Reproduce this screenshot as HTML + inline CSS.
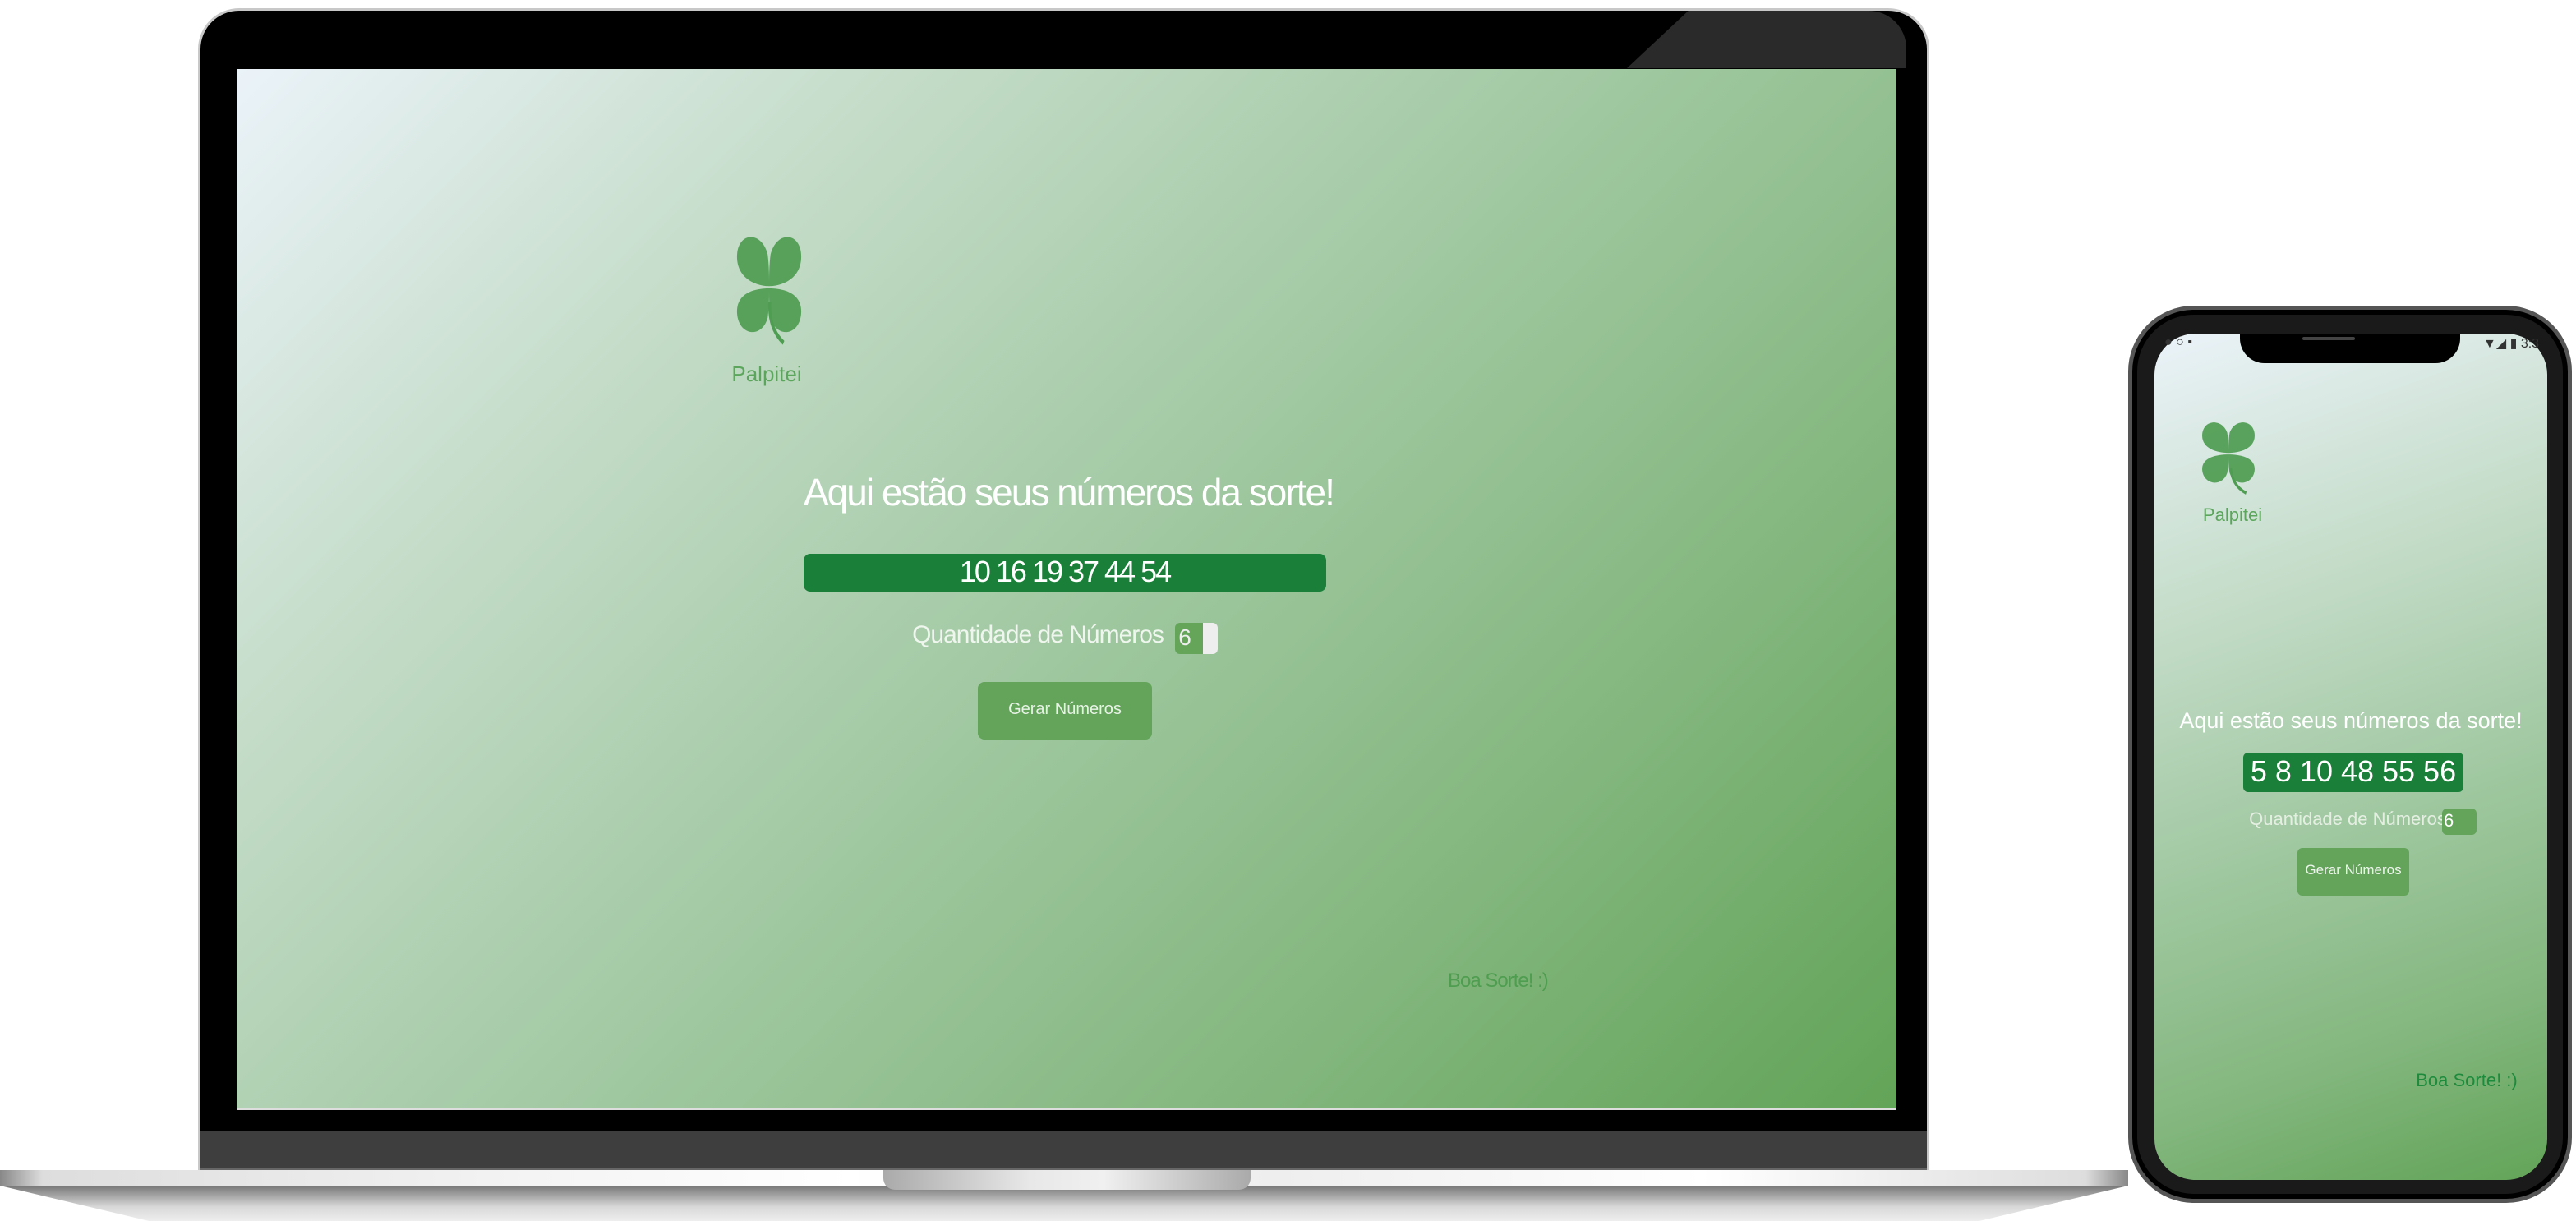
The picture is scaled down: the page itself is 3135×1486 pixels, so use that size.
<!DOCTYPE html>
<html><head><meta charset="utf-8"><style>
*{margin:0;padding:0;box-sizing:border-box}
body{width:3135px;height:1486px;background:#fff;position:relative;overflow:hidden;font-family:"Liberation Sans",sans-serif}
.a{position:absolute}
.grad{background:linear-gradient(135deg,#ebf3f9 0%,#c4dcc8 25%,#a2c9a3 50%,#84b77f 75%,#62a458 100%)}
.t{position:absolute;white-space:nowrap;text-align:center}
</style></head><body>
<div class="a" style="left:0;top:1424px;width:2590px;height:20px;background:linear-gradient(90deg,#888 0%,#ddd 2%,#f4f4f4 25%,#fff 40%,#eee 60%,#fff 80%,#ddd 98%,#888 100%)"></div>
<div class="a" style="left:0;top:1443px;width:2590px;height:43px;background:linear-gradient(180deg,#777,#d8d8d8 60%,#eee);clip-path:polygon(0 0,100% 0,93% 100%,7% 100%);border-radius:0 0 60px 60px"></div>
<div class="a" style="left:1075px;top:1424px;width:447px;height:24px;background:linear-gradient(90deg,#aaa,#e8e8e8 40%,#f0f0f0 60%,#aaa);border-radius:0 0 14px 14px"></div>
<div class="a" style="left:241px;top:10px;width:2107px;height:1414px;background:#000;border-radius:50px 50px 0 0;border:3px solid #c8c8c8;border-bottom:none"></div>
<div class="a" style="left:244px;top:1376px;width:2101px;height:48px;background:#3e3e3e;border-bottom:3px solid #666"></div>
<div class="a" style="left:1980px;top:13px;width:340px;height:70px;background:#2a2a2a;clip-path:polygon(22% 0,100% 0,100% 100%,0 100%);border-radius:0 46px 0 0"></div>
<div class="a grad" style="left:288px;top:84px;width:2020px;height:1267px;border-bottom:3px solid #ddd">
<svg class="a" style="left:604px;top:198px" width="88" height="138" viewBox="0 0 100 100" preserveAspectRatio="none">
<g fill="#4f9d52" opacity=".92">
<path d="M50 48 C30 48 2 40 6 18 C10 0 40 0 48 20 C50 30 50 40 50 48Z"/>
<path d="M50 48 C70 48 98 40 94 18 C90 0 60 0 52 20 C50 30 50 40 50 48Z"/>
<path d="M50 50 C30 50 2 54 6 74 C10 92 40 94 48 76 C50 66 50 58 50 50Z"/>
<path d="M50 50 C70 50 98 54 94 74 C90 92 60 94 52 76 C50 66 50 58 50 50Z"/></g>
<path d="M51 62 Q49 85 70 98" stroke="#4f9d52" stroke-width="4" fill="none"/>
</svg>
<div class="t" style="left:540px;top:356px;width:210px;font-size:26px;color:#5ca55c">Palpitei</div>
<div class="t" style="left:690px;top:488px;width:636px;font-size:46px;color:#fff;letter-spacing:-2px">Aqui estão seus números da sorte!</div>
<div class="a" style="left:690px;top:590px;width:636px;height:46px;background:#1a8039;border-radius:8px"></div>
<div class="t" style="left:690px;top:591px;width:636px;font-size:36px;color:#fff;letter-spacing:-2px">10 16 19 37 44 54</div>
<div class="t" style="left:820px;top:672px;width:310px;font-size:30px;color:#eef6ee;letter-spacing:-1px">Quantidade de Números</div>
<div class="a" style="left:1142px;top:674px;width:52px;height:38px;background:#64a55a;border-radius:6px"></div>
<div class="a" style="left:1176px;top:674px;width:18px;height:38px;background:#eee;border-radius:0 6px 6px 0"></div>
<div class="t" style="left:1142px;top:676px;width:24px;font-size:28px;color:#eee">6</div>
<div class="a" style="left:902px;top:746px;width:212px;height:70px;background:#63a35a;border-radius:8px"></div>
<div class="t" style="left:902px;top:768px;width:212px;font-size:20px;color:#e8f2e6">Gerar Números</div>
<div class="t" style="left:1474px;top:1096px;width:120px;font-size:24px;color:#4e9d50;letter-spacing:-1px">Boa Sorte! :)</div>
</div>
<div class="a" style="left:2590px;top:372px;width:540px;height:1092px;background:#1a1a1a;border-radius:80px;border:5px solid #555;box-shadow:inset 0 0 0 6px #000"></div>
<div class="a" style="left:2622px;top:406px;width:478px;height:1030px;border-radius:50px;background:linear-gradient(160deg,#ebf3f9 0%,#c4dcc8 30%,#a2c9a3 55%,#84b77f 80%,#62a458 100%)">
<div class="a" style="left:104px;top:0;width:268px;height:36px;background:#000;border-radius:0 0 30px 30px"></div>
<div class="a" style="left:180px;top:4px;width:64px;height:4px;background:#444;border-radius:2px"></div>
<div class="t" style="left:12px;top:2px;font-size:16px;color:#333">● ○ ▪</div>
<div class="t" style="left:400px;top:2px;font-size:16px;color:#333">▼◢ ▮ 3:3</div>
<svg class="a" style="left:54px;top:102px" width="72" height="94" viewBox="0 0 100 100" preserveAspectRatio="none">
<g fill="#4f9d52" opacity=".92">
<path d="M50 46 C30 46 2 40 6 20 C10 2 40 2 48 20 C50 30 50 40 50 46Z"/>
<path d="M50 46 C70 46 98 40 94 20 C90 2 60 2 52 20 C50 30 50 40 50 46Z"/>
<path d="M50 48 C30 48 2 52 6 70 C10 88 40 90 48 72 C50 62 50 56 50 48Z"/>
<path d="M50 48 C70 48 98 52 94 70 C90 88 60 90 52 72 C50 62 50 56 50 48Z"/></g>
<path d="M54 66 Q56 88 80 98" stroke="#4f9d52" stroke-width="4" fill="none"/>
</svg>
<div class="t" style="left:30px;top:208px;width:130px;font-size:22px;color:#5ca55c">Palpitei</div>
<div class="t" style="left:0;top:456px;width:478px;font-size:27px;color:#fff">Aqui estão seus números da sorte!</div>
<div class="a" style="left:108px;top:510px;width:268px;height:48px;background:#1a8039;border-radius:6px"></div>
<div class="t" style="left:108px;top:512px;width:268px;font-size:36px;color:#fff">5 8 10 48 55 56</div>
<div class="t" style="left:90px;top:578px;width:290px;font-size:22px;color:#e4efe2">Quantidade de Números</div>
<div class="a" style="left:350px;top:578px;width:42px;height:32px;background:#63a35a;border-radius:6px"></div>
<div class="t" style="left:352px;top:580px;font-size:22px;color:#fff">6</div>
<div class="a" style="left:174px;top:626px;width:136px;height:58px;background:#63a35a;border-radius:6px"></div>
<div class="t" style="left:174px;top:643px;width:136px;font-size:17px;color:#eef5ec">Gerar Números</div>
<div class="t" style="left:318px;top:896px;width:124px;font-size:22px;color:#1e8a3c">Boa Sorte! :)</div>
</div>
</body></html>
